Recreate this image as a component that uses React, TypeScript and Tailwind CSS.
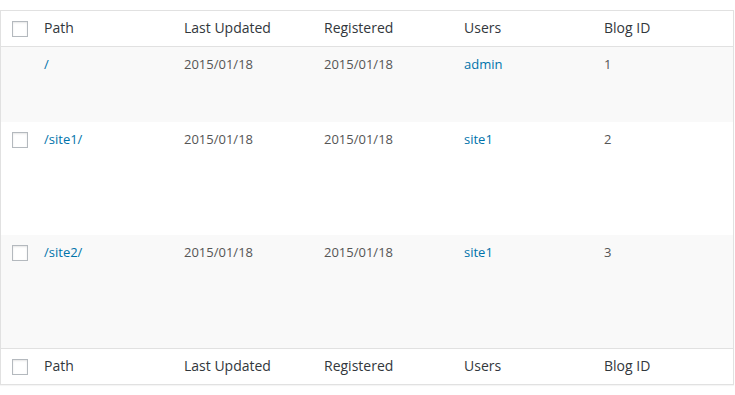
const rows = [
  { path: '/', updated: '2015/01/18', registered: '2015/01/18', user: 'admin', id: 1, check: false, h: 'h-[75px]', bg: 'bg-[#f9f9f9]' },
  { path: '/site1/', updated: '2015/01/18', registered: '2015/01/18', user: 'site1', id: 2, check: true, h: 'h-[113px]', bg: 'bg-white' },
  { path: '/site2/', updated: '2015/01/18', registered: '2015/01/18', user: 'site1', id: 3, check: true, h: 'h-[113px]', bg: 'bg-[#f9f9f9]' },
];

const cols = 'grid grid-cols-[33px_140px_140px_140px_140px_1fr]';

function Checkbox() {
  return <span className="block w-4 h-4 border border-[#b4b9be] bg-white shadow-[inset_0_1px_2px_rgba(0,0,0,0.1)]" />;
}

function HeadRow({ bottom }: { bottom?: boolean }) {
  return (
    <div className={`${cols} h-9 items-center bg-white text-[14px] text-[#32373c] ${bottom ? 'border-t border-[#e1e1e1]' : 'border-b border-[#e1e1e1]'}`}>
      <div className="pl-[11px]">
        <Checkbox />
      </div>
      <div className="pl-[10px] pb-[2px]">Path</div>
      <div className="pl-[10px] pb-[2px]">Last Updated</div>
      <div className="pl-[10px] pb-[2px]">Registered</div>
      <div className="pl-[10px] pb-[2px]">Users</div>
      <div className="pl-[10px] pb-[2px]">Blog ID</div>
    </div>
  );
}

export default function App() {
  return (
    <div className="bg-white pt-[10px] w-[735px] h-[395px]" style={{ fontFamily: "'Open Sans', sans-serif" }}>
      <div className="w-[734px] border border-[#e1e1e1] shadow-[0_1px_1px_rgba(0,0,0,0.04)]">
        <HeadRow />
        {rows.map((r) => (
          <div key={r.id} className={`${cols} ${r.h} ${r.bg} text-[13px] text-[#555] leading-5`}>
            <div className="pl-[11px] pt-[10px]">{r.check && <Checkbox />}</div>
            <div className="pl-[10px] pt-[7px] text-[#0073aa]">{r.path}</div>
            <div className="pl-[10px] pt-[7px]">{r.updated}</div>
            <div className="pl-[10px] pt-[7px]">{r.registered}</div>
            <div className="pl-[10px] pt-[7px] text-[#0073aa]">{r.user}</div>
            <div className="pl-[10px] pt-[7px]">{r.id}</div>
          </div>
        ))}
        <HeadRow bottom />
      </div>
    </div>
  );
}
